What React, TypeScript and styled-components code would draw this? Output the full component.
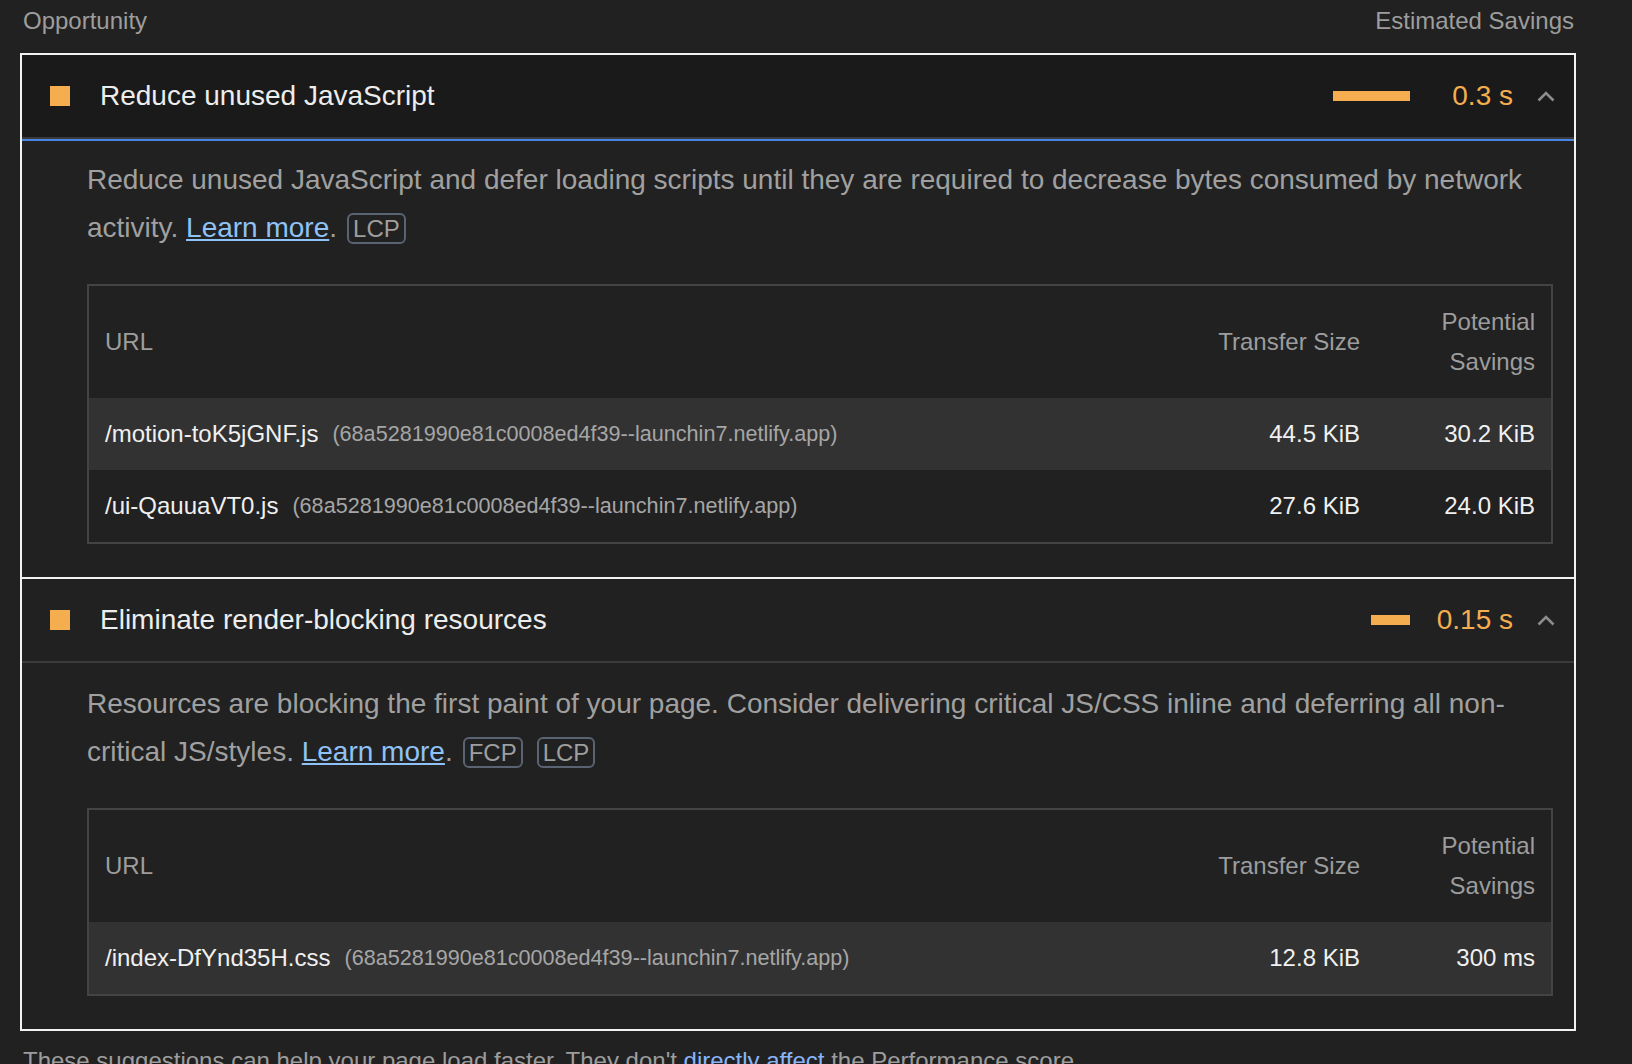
import styled, { createGlobalStyle } from "styled-components"

const GlobalStyle = createGlobalStyle`
    body {
        margin: 0;
        background-color: #212121;
        font-family: "Liberation Sans", Arial, Helvetica, sans-serif;
    }
`

const ORANGE = "#f4ae4f"

interface Row {
    file: string
    host: string
    size: string
    savings: string
}

interface AuditData {
    title: string
    savings: string
    barWidth: number
    description: string
    badges: string[]
    rows: Row[]
}

const HOST = "(68a5281990e81c0008ed4f39--launchin7.netlify.app)"

const audits: AuditData[] = [
    {
        title: "Reduce unused JavaScript",
        savings: "0.3 s",
        barWidth: 77,
        description:
            "Reduce unused JavaScript and defer loading scripts until they are required to decrease bytes consumed by network activity.",
        badges: ["LCP"],
        rows: [
            { file: "/motion-toK5jGNF.js", host: HOST, size: "44.5 KiB", savings: "30.2 KiB" },
            { file: "/ui-QauuaVT0.js", host: HOST, size: "27.6 KiB", savings: "24.0 KiB" },
        ],
    },
    {
        title: "Eliminate render-blocking resources",
        savings: "0.15 s",
        barWidth: 39,
        description:
            "Resources are blocking the first paint of your page. Consider delivering critical JS/CSS inline and deferring all non-critical JS/styles.",
        badges: ["FCP", "LCP"],
        rows: [
            { file: "/index-DfYnd35H.css", host: HOST, size: "12.8 KiB", savings: "300 ms" },
        ],
    },
]

const Page = styled.div`
    padding: 0 56px 0 20px;
`

const GroupHeader = styled.div`
    display: flex;
    justify-content: space-between;
    padding: 1px 2px 0 3px;
    margin-bottom: 12px;
    font-size: 24px;
    line-height: 40px;
    color: #9d9d9d;
`

const Card = styled.div`
    border: 2px solid #f2f2f2;
`

const Audit = styled.div`
    & + & {
        border-top: 2px solid #f2f2f2;
    }
`

const AuditHeader = styled.div<{ $active?: boolean }>`
    display: flex;
    align-items: center;
    height: 82px;
    padding: 0 19px 0 28px;
    margin-bottom: 2px;
    background-color: ${(p) => (p.$active ? "#1a1a1a" : "#212121")};
    border-bottom: 2px solid #3b3b3b;
    box-shadow: ${(p) => (p.$active ? "0 2px 0 #4a84e4" : "none")};
`

const Square = styled.div`
    width: 20px;
    height: 20px;
    background-color: ${ORANGE};
    margin-right: 30px;
    flex-shrink: 0;
`

const Title = styled.div`
    flex: 1;
    font-size: 28px;
    color: #ededed;
`

const Bar = styled.div`
    height: 10px;
    background-color: ${ORANGE};
`

const SavingsText = styled.div`
    width: 103px;
    text-align: right;
    font-size: 28px;
    color: ${ORANGE};
`

const Chevron = styled.svg`
    margin-left: 24px;
    flex-shrink: 0;
`

const AuditBody = styled.div`
    padding: 15px 21px 33px 65px;
`

const Description = styled.div`
    font-size: 28px;
    line-height: 48px;
    color: #a0a0a0;
`

const Link = styled.a`
    color: #8fc2f6;
    text-decoration: underline;
    text-underline-offset: 2px;
`

const Badge = styled.span`
    display: inline-block;
    margin-left: 10px;
    padding: 0 4px;
    border: 2px solid #5a6372;
    border-radius: 6px;
    font-size: 24px;
    line-height: 27px;
    color: #9e9e9e;

    & + & {
        margin-left: 14px;
    }
`

const Table = styled.div`
    margin-top: 32px;
    border: 2px solid #444444;
`

const TableRow = styled.div<{ $striped?: boolean }>`
    display: grid;
    grid-template-columns: 1fr 175px 175px;
    background-color: ${(p) => (p.$striped ? "#323232" : "#212121")};
    font-size: 24px;
    line-height: 40px;
`

const Cell = styled.div<{ $right?: boolean; $head?: boolean }>`
    display: flex;
    align-items: center;
    justify-content: ${(p) => (p.$right ? "flex-end" : "flex-start")};
    text-align: ${(p) => (p.$right ? "right" : "left")};
    padding: 16px;
    color: ${(p) => (p.$head ? "#9d9d9d" : "#f0f0f0")};
    white-space: ${(p) => (p.$head ? "normal" : "nowrap")};
`

const Host = styled.span`
    margin-left: 14px;
    font-size: 21.6px;
    color: #a6a6a6;
`

const Footer = styled.div`
    margin-top: 10px;
    padding-left: 3px;
    font-size: 24px;
    line-height: 40px;
    color: #9d9d9d;
`

const FooterLink = styled.a`
    color: #8ab4f8;
    text-decoration: none;
`

const ChevronUp = () => (
    <Chevron width="18" height="11" viewBox="0 0 18 11">
        <polyline
            points="1.5,9.5 9,2 16.5,9.5"
            fill="none"
            stroke="#8c8c8c"
            strokeWidth="2.6"
        />
    </Chevron>
)

const AuditItem = ({ audit, active }: { audit: AuditData; active?: boolean }) => (
    <Audit>
        <AuditHeader $active={active}>
            <Square />
            <Title>{audit.title}</Title>
            <Bar style={{ width: audit.barWidth }} />
            <SavingsText>{audit.savings}</SavingsText>
            <ChevronUp />
        </AuditHeader>
        <AuditBody>
            <Description>
                {audit.description} <Link href="#">Learn more</Link>.
                {audit.badges.map((b) => (
                    <Badge key={b}>{b}</Badge>
                ))}
            </Description>
            <Table>
                <TableRow>
                    <Cell $head>URL</Cell>
                    <Cell $head $right>
                        Transfer Size
                    </Cell>
                    <Cell $head $right>
                        Potential Savings
                    </Cell>
                </TableRow>
                {audit.rows.map((row, i) => (
                    <TableRow key={row.file} $striped={i % 2 === 0}>
                        <Cell>
                            {row.file}
                            <Host>{row.host}</Host>
                        </Cell>
                        <Cell $right>{row.size}</Cell>
                        <Cell $right>{row.savings}</Cell>
                    </TableRow>
                ))}
            </Table>
        </AuditBody>
    </Audit>
)

export default function App() {
    return (
        <Page>
            <GlobalStyle />
            <GroupHeader>
                <span>Opportunity</span>
                <span>Estimated Savings</span>
            </GroupHeader>
            <Card>
                {audits.map((a, i) => (
                    <AuditItem key={a.title} audit={a} active={i === 0} />
                ))}
            </Card>
            <Footer>
                These suggestions can help your page load faster. They don't{" "}
                <FooterLink href="#">directly affect</FooterLink> the Performance score.
            </Footer>
        </Page>
    )
}
